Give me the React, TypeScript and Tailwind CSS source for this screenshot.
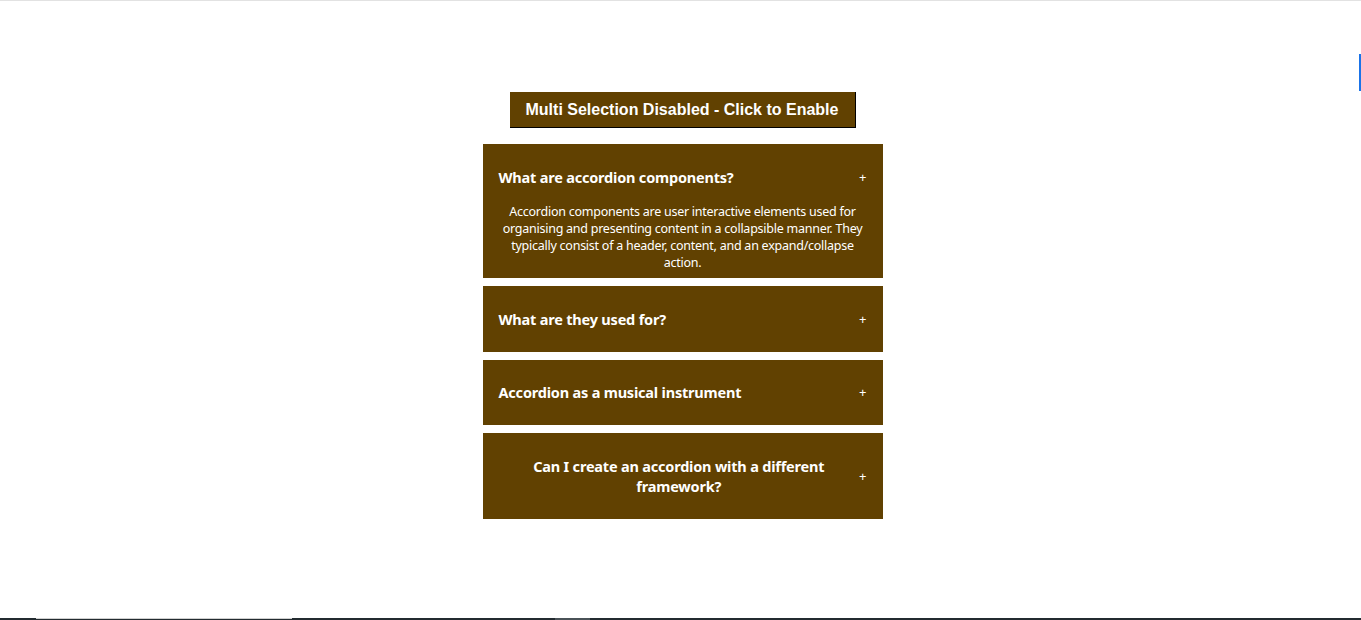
import { useState } from "react";

const data = [
  {
    id: "1",
    question: "What are accordion components?",
    answer:
      "Accordion components are user interactive elements used for organising and presenting content in a collapsible manner. They typically consist of a header, content, and an expand/collapse action.",
  },
  {
    id: "2",
    question: "What are they used for?",
    answer:
      "They are commonly employed in various contexts, including FAQs, product descriptions, navigation menus, settings panels, and data tables, to save screen space and provide a structured and user-friendly interface for presenting information or options.",
  },
  {
    id: "3",
    question: "Accordion as a musical instrument",
    answer:
      "The accordion is a musical instrument with a keyboard and bellows. It produces sound by air passing over reeds when the player expands or compresses the bellows, used in various music genres.",
  },
  {
    id: "4",
    question: "Can I create an accordion with a different framework?",
    answer:
      "Yes of course, it is very possible to create an accordion component with another framework.",
  },
];

export default function App() {
  const [multi, setMulti] = useState(false);
  const [selected, setSelected] = useState<string[]>(["1"]);

  function toggle(id: string) {
    if (multi) {
      setSelected((s) => (s.includes(id) ? s.filter((x) => x !== id) : [...s, id]));
    } else {
      setSelected((s) => (s.includes(id) ? [] : [id]));
    }
  }

  return (
    <div className="relative h-[620px] overflow-hidden border-t border-[#e2e2e2] bg-white">
      <div className="flex flex-col items-center pt-[91px] pl-[4px]">
        <button
          onClick={() => setMulti(!multi)}
          className="h-[36px] w-[346px] border-r border-b border-black bg-[#614101] font-['Liberation_Sans',Arial,sans-serif] text-[16px] font-bold text-white"
        >
          Multi Selection {multi ? "Enabled" : "Disabled"} - Click to {multi ? "Disable" : "Enable"}
        </button>
        <div className="mt-[16px] flex w-[400px] flex-col gap-[8px] font-['Noto_Sans',sans-serif] text-white">
          {data.map((item) => {
            const open = selected.includes(item.id);
            return (
              <div key={item.id} className="bg-[#614101]">
                <div
                  onClick={() => toggle(item.id)}
                  className={`flex cursor-pointer items-center justify-between px-[16px] ${
                    open ? "pt-[23px] pb-[16px]" : "py-[22.75px]"
                  }`}
                >
                  <h3 className="px-[34px] first:px-0 text-center text-[14.5px] leading-[20px] font-bold tracking-[-0.2px]">
                    {item.question}
                  </h3>
                  <span className="text-[13px] leading-[20px]">+</span>
                </div>
                {open && (
                  <div className="px-[14px] pb-[7px] text-center text-[12.5px] leading-[17px] tracking-[-0.25px]">
                    {item.answer}
                  </div>
                )}
              </div>
            );
          })}
        </div>
      </div>
      <div className="absolute top-[53px] right-0 h-[37px] w-[2px] bg-[#1a73e8]" />
      <div className="absolute bottom-0 left-0 flex h-[2px] w-full bg-[#232b30]">
        <div className="ml-[36px] h-[1px] w-[256px] bg-[#cfcfcf]" />
        <div className="ml-[263px] h-[2px] w-[35px] bg-[#4a5257]" />
      </div>
    </div>
  );
}
